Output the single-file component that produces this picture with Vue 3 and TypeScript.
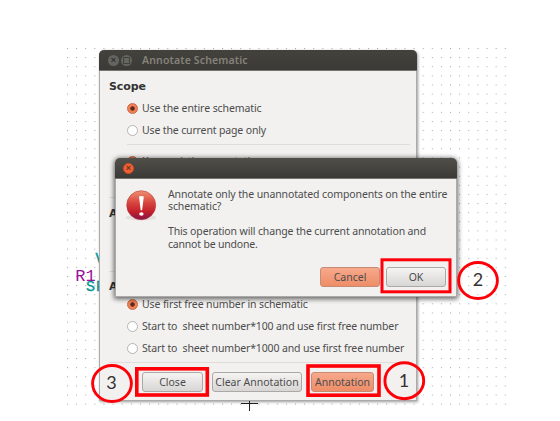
<script setup lang="ts">
interface Section {
  title: string
  options: { label: string; checked: boolean; fit: string }[]
}

const sections: Section[] = [
  {
    title: 'Scope',
    options: [
      { label: 'Use the entire schematic', checked: true, fit: 'a' },
      { label: 'Use the current page only', checked: false, fit: 'b' },
    ],
  },
  {
    title: '',
    options: [{ label: 'Keep existing annotation', checked: true, fit: 'a' }],
  },
  { title: 'Annotation Order', options: [] },
  {
    title: 'Annotation Choice',
    options: [
      { label: 'Use first free number in schematic', checked: true, fit: 'c' },
      { label: 'Start to  sheet number*100 and use first free number', checked: false, fit: 'b' },
      { label: 'Start to  sheet number*1000 and use first free number', checked: false, fit: 'b' },
    ],
  },
]
</script>

<template>
  <main class="desktop">
    <svg class="canvas" width="560" height="421" viewBox="0 0 560 421">
      <defs>
        <pattern id="grid" x="67" y="48" width="9.12" height="9.12" patternUnits="userSpaceOnUse">
          <rect width="1" height="1" fill="#a4a4a4" />
        </pattern>
      </defs>
      <rect x="67" y="48" width="440" height="357" fill="url(#grid)" />
      <path d="M241 403.5H258M249.5 401V411" stroke="#222" fill="none" />
      <g class="schematic">
        <text x="75.3" y="280.5" fill="#9c0f9c" font-size="17">R1</text>
        <text x="95.5" y="263" fill="#009696" font-size="14" stroke="#009696" stroke-width=".4">V</text>
        <text x="86" y="290.5" fill="#009696" font-size="15" letter-spacing="1" stroke="#009696" stroke-width=".3">SP</text>
      </g>
    </svg>

    <section class="window main-window">
      <header class="titlebar">
        <i class="dot">×</i><i class="dot square"></i>
        <span>Annotate Schematic</span>
      </header>
      <div class="content">
        <div v-for="(s, i) in sections" :key="i" class="group" :class="'group-' + i">
          <h2 v-if="s.title">{{ s.title }}</h2>
          <label v-for="o in s.options" :key="o.label" class="option">
            <i class="radio" :class="{ on: o.checked }"></i>
            <span :class="'fit-' + o.fit">{{ o.label }}</span>
          </label>
          <hr />
        </div>
        <footer class="actions">
          <button class="close-button">Close</button>
          <button class="clear-button">Clear Annotation</button>
          <button class="accent annotate-button">Annotation</button>
        </footer>
      </div>
    </section>

    <section class="window dialog">
      <header class="titlebar"><i class="dot hot">×</i></header>
      <div class="message">
        <svg class="alert" width="32" height="34" viewBox="0 0 32 34">
          <defs>
            <linearGradient id="red" x2="0" y2="1">
              <stop offset="0" stop-color="#ee9070" />
              <stop offset=".4" stop-color="#d94740" />
              <stop offset=".72" stop-color="#c4202b" />
              <stop offset="1" stop-color="#831348" />
            </linearGradient>
          </defs>
          <ellipse cx="16" cy="28.5" rx="15.5" ry="3" fill="#e2e1e0" />
          <circle cx="16.2" cy="16.2" r="14.5" fill="url(#red)" stroke="#bd3b3b" stroke-width=".6" />
          <path d="M14 7.6Q16.4 6.2 18.8 7.6L17.1 21.2H15.7Z" fill="#fff" />
          <ellipse cx="16.4" cy="25" rx="2.2" ry="1.8" fill="#fff" />
        </svg>
        <div class="copy">
          <p class="l1">Annotate only the unannotated components on the entire</p>
          <p class="l2">schematic?</p>
          <p class="l3">This operation will change the current annotation and</p>
          <p class="l4">cannot be undone.</p>
        </div>
      </div>
      <footer class="replies">
        <button class="accent">Cancel</button>
        <button>OK</button>
      </footer>
    </section>

    <svg class="callouts" width="560" height="421" viewBox="0 0 560 421">
      <g fill="none" stroke="#ff0008">
        <g stroke-width="3.6">
          <rect x="136.8" y="368.8" width="70.5" height="26.2" />
          <rect x="308" y="366" width="71" height="29.2" />
          <rect x="382" y="259.8" width="68" height="32" stroke-width="3" />
        </g>
        <g stroke-width="2.9">
          <ellipse cx="112" cy="383.5" rx="19.4" ry="18" />
          <ellipse cx="404.3" cy="380.7" rx="19.4" ry="18" />
          <ellipse cx="478" cy="280.5" rx="19.4" ry="18" />
        </g>
      </g>
      <g class="numbers">
        <text x="111.5" y="389.3">3</text>
        <text x="404" y="386.8">1</text>
        <text x="478" y="286.3">2</text>
      </g>
    </svg>
  </main>
</template>

<style>
body { background: #fff; overflow: hidden; }
</style>

<style scoped>
* { box-sizing: border-box; }
.desktop { position: relative; width: 560px; height: 421px; overflow: hidden; font: 10.5px "Noto Sans", "Open Sans", sans-serif; color: #4c4c4c; }
.canvas, .callouts { position: absolute; left: 0; top: 0; }
.schematic { font-family: "Liberation Mono", monospace; }
.numbers { font: 18px Lato, sans-serif; fill: #333; text-anchor: middle; }
.window { position: absolute; background: #f2f1f0; border-radius: 5px 5px 0 0; }
.main-window { left: 99px; top: 50px; width: 318px; height: 351px; border: solid #aaa; border-width: 0 1px 1px; box-shadow: 1px 1px 3px #0006; }
.dialog { left: 115px; top: 158px; width: 342px; height: 139px; box-shadow: 0 1px 5px 1px #0009; border: solid #aaa; border-width: 0 1px 1px; }
.titlebar { display: flex; align-items: center; gap: 2px; height: 21px; margin: 0 -1px; padding-left: 9px; border-radius: 5px 5px 0 0; background: linear-gradient(#43423d, #3b3a36); border-bottom: 1px solid #75746f; color: #85827b; font-weight: 600; font-size: 10.5px; white-space: nowrap; }
.titlebar span { margin-left: 8px; letter-spacing: .15px; }
.dot { display: flex; align-items: center; justify-content: center; width: 11px; height: 11px; border-radius: 50%; background: #656560; color: #30302c; font: bold 9px/9px "Liberation Sans", sans-serif; }
.dot.square::after { content: ""; width: 5px; height: 5px; border: 1px solid #42423d; }
.dot.hot { background: #ef6236; color: #70301c; border: 1px solid #d64a25; }
.dialog .titlebar { padding-left: 8px; background: linear-gradient(#504f49, #3b3a36); }
.content { padding: 4px 8px 0 9px; }
.group { display: flex; flex-direction: column; }
.group-0 { height: 70px; }
.group-1 { height: 53px; padding-top: 5px; }
.group-2 { height: 74px; padding-top: 4px; }
.group-3 { height: 91px; padding-top: 5px; }
hr { width: 100%; height: 1px; margin: auto 0 0; border: 0; background: #deddda; flex: none; }
.group-0 hr { width: 283px; margin-left: 18px; }
h2 { margin: 0; height: 22px; flex: none; font: bold 11px/23px "DejaVu Sans", sans-serif; color: #333; letter-spacing: -.1px; }
.group-3 h2 { height: 16px; line-height: 20px; }
.option { display: flex; align-items: center; flex: none; height: 22px; padding-left: 18px; gap: 4px; white-space: pre; line-height: 20px; }
.radio { flex: none; width: 11px; height: 11px; border: 1px solid #b5b4b1; border-radius: 50%; background: #fff; }
.radio.on { border-color: #c66845; background: radial-gradient(circle, #5c2b1b 0 1.8px, #f28055 2.6px); }
.fit-a { letter-spacing: -.09px; }
.fit-b { letter-spacing: -.14px; }
.fit-c { letter-spacing: -.12px; }
.actions { display: flex; padding: 9px 0 0 33px; }
button { height: 19.5px; padding: 0; border: 1px solid #aaa9a6; border-radius: 3px; background: linear-gradient(#f5f4f3, #d7d6d5); color: #4c4c4c; font: 10.5px/16px "Noto Sans", "Open Sans", sans-serif; white-space: nowrap; }
.accent { border-color: #c68b73; background: linear-gradient(#f7a88c, #ee8d67); }
.close-button { width: 61px; margin-right: 9px; }
.clear-button { width: 90px; margin-right: 9px; }
.annotate-button { width: 63px; }
.message { display: flex; gap: 11px; padding: 10px 0 0 9px; height: 88px; }
.copy { white-space: nowrap; margin-top: -1.5px; }
p { margin: 0; height: 12.5px; line-height: 12.5px; }
.l1 { letter-spacing: -.115px; }
.l2 { margin-bottom: 12.5px; letter-spacing: -.1px; }
.l3 { letter-spacing: -.14px; }
.l4 { letter-spacing: -.2px; }
.replies { display: flex; justify-content: flex-end; padding-right: 10px; gap: 6px; }
.replies button { width: 60px; }
</style>
